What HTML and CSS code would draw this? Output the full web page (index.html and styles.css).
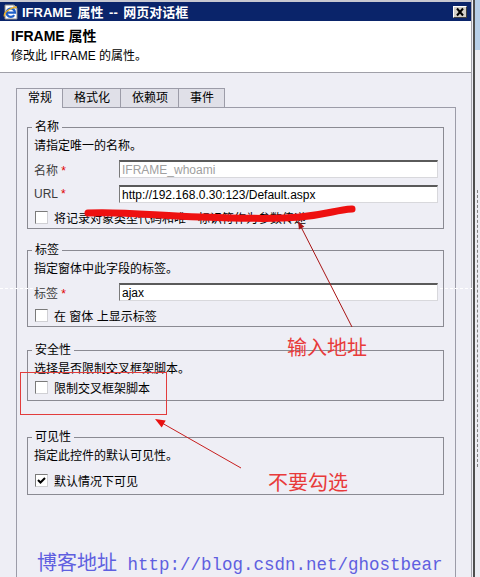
FILE: index.html
```html
<!DOCTYPE html>
<html>

<head>
  <meta charset="utf-8">
  <title>IFRAME 属性 -- 网页对话框</title>
  <link rel="stylesheet" href="styles.css">
</head>

<body>
  <div class="screen">
    <div class="dialog">
      <!-- Window title bar -->
      <div class="titlebar">
        <svg class="app-icon" viewBox="0 0 16 16">
          <path d="M2 1h9l3 3v11H2z" fill="#fdfdfd" stroke="#8a8a8a" stroke-width="1"/>
          <path d="M11 1v3h3" fill="#dcdcdc" stroke="#8a8a8a" stroke-width="1"/>
          <path d="M11.2 11.2A4.2 4.2 0 1 1 12 8.6H4.6" fill="none" stroke="#1f5fc8" stroke-width="2.2"/>
          <path d="M1.5 12.5C0 9 7 3.5 14 2.8" fill="none" stroke="#f0b020" stroke-width="1.3"/>
        </svg>
        <span class="title">IFRAME 属性 -- 网页对话框</span>
        <span class="close-button">
          <svg viewBox="0 0 12 10" width="12" height="10">
            <path d="M3 1.5l6 7M9 1.5l-6 7" stroke="#000" stroke-width="2"/>
          </svg>
        </span>
      </div>

      <!-- Dialog header -->
      <div class="dialog-header">
        <h1>IFRAME 属性</h1>
        <p>修改此 IFRAME 的属性。</p>
      </div>

      <div class="dialog-body">
        <div class="tabs">
          <span class="tab active">常规</span>
          <span class="tab">格式化</span>
          <span class="tab">依赖项</span>
          <span class="tab">事件</span>
        </div>

        <div class="tab-panel">
          <!-- Name -->
          <fieldset class="group">
            <legend>名称</legend>
            <p class="group-desc">请指定唯一的名称。</p>
            <div class="field-row">
              <label>名称 <span class="required">*</span></label>
              <input type="text" value="IFRAME_whoami" disabled>
            </div>
            <div class="field-row">
              <label>URL <span class="required">*</span></label>
              <input type="text" value="http://192.168.0.30:123/Default.aspx">
            </div>
            <div class="check-row">
              <span class="checkbox"></span>
              <span>将记录对象类型代码和唯一标识符作为参数传递</span>
            </div>
          </fieldset>

          <!-- Label -->
          <fieldset class="group">
            <legend>标签</legend>
            <p class="group-desc">指定窗体中此字段的标签。</p>
            <div class="field-row">
              <label>标签 <span class="required">*</span></label>
              <input type="text" value="ajax">
            </div>
            <div class="check-row">
              <span class="checkbox"></span>
              <span>在 窗体 上显示标签</span>
            </div>
          </fieldset>

          <!-- Security -->
          <fieldset class="group group-security">
            <legend>安全性</legend>
            <p class="group-desc">选择是否限制交叉框架脚本。</p>
            <div class="check-row">
              <span class="checkbox"></span>
              <span>限制交叉框架脚本</span>
            </div>
          </fieldset>

          <!-- Visibility -->
          <fieldset class="group group-visibility">
            <legend>可见性</legend>
            <p class="group-desc">指定此控件的默认可见性。</p>
            <div class="check-row">
              <span class="checkbox">
                <svg viewBox="0 0 11 11" width="11" height="11">
                  <path d="M2 5l2.5 2.5L9 3" fill="none" stroke="#000" stroke-width="2"/>
                </svg>
              </span>
              <span>默认情况下可见</span>
            </div>
          </fieldset>
        </div>
      </div>
    </div>

    <!-- Strip of the window behind the dialog -->
    <div class="desktop">
      <div class="desktop-top"></div>
      <div class="desktop-dash"></div>
    </div>

    <!-- Hand-drawn annotations over the screenshot -->
    <svg class="marks" width="480" height="577" viewBox="0 0 480 577">
      <path d="M88 213C120 211 160 216 200 217S270 220 300 217S335 210 352 209" fill="none" stroke="#ee1010" stroke-width="7" stroke-linecap="round"/>
      <line x1="352" y1="327" x2="299" y2="223" stroke="#a81414" stroke-width="1"/>
      <polygon points="298,221 304.3,226.8 298.9,229.5" fill="#a81414"/>
      <rect x="20.5" y="372.5" width="146" height="42" fill="none" stroke="#e23c3c"/>
      <line x1="241" y1="468" x2="162" y2="423" stroke="#c81e1e" stroke-width="1"/>
      <polygon points="155,419 165.7,420.5 161.7,427.5" fill="#e81010"/>
      <line x1="0" y1="288.5" x2="34" y2="288.5" stroke="#fff" stroke-dasharray="3 2"/>
      <line x1="440" y1="288.5" x2="472" y2="288.5" stroke="#fff" stroke-dasharray="3 2"/>
    </svg>
    <span class="note note-url">输入地址</span>
    <span class="note note-check">不要勾选</span>
    <div class="watermark"><span class="watermark-cjk">博客地址</span> http://blog.csdn.net/ghostbear</div>
  </div>
</body>

</html>
```

FILE: styles.css
```css
body {
  margin: 0;
  font-family: "Liberation Sans", "Noto Sans CJK SC", sans-serif;
  font-size: 12px;
  color: #000;
  background-color: #eeeef5;
}

.screen {
  position: relative;
  width: 480px;
  height: 577px;
  overflow: hidden;
  display: flex;
}

.dialog {
  width: 471px;
  border-right: 1px solid #a4a4ac;
  background-color: #eeeef5;
  display: flex;
  flex-direction: column;
}

/* title bar */
.titlebar {
  height: 19px;
  border-top: 2px solid #c8c8d0;
  background-color: #0a246a;
  color: #fff;
  display: flex;
  align-items: center;
  padding: 0 4px 0 3px;
}

.app-icon {
  width: 16px;
  height: 16px;
  margin-right: 3px;
}

.title {
  flex: 1;
  font-size: 13px;
  font-weight: bold;
  word-spacing: 2px;
}

.close-button {
  width: 14px;
  height: 12px;
  box-sizing: border-box;
  background-color: #d4d0c8;
  border: 1px solid;
  border-color: #fff #404040 #404040 #fff;
  display: flex;
  align-items: center;
  justify-content: center;
}

/* header */
.dialog-header {
  height: 36px;
  background-color: #fff;
  border-bottom: 1px solid #a0a0a8;
  padding: 7px 11px 8px;
}

h1 {
  height: 16px;
  margin: 0;
  font-size: 14px;
  line-height: 16px;
  font-weight: bold;
}

.dialog-header p {
  height: 16px;
  margin: 4px 0 0;
  line-height: 16px;
}

/* tabs */
.dialog-body {
  padding: 15px 0 0 16px;
}

.tabs {
  display: flex;
  position: relative;
  z-index: 1;
}

.tab {
  height: 18px;
  line-height: 18px;
  padding: 0 10px 0 11px;
  border-top: 1px solid #9c9ca8;
  border-right: 1px solid #9c9ca8;
  background-color: #e0e0e8;
}

.tab:first-child {
  border-left: 1px solid #9c9ca8;
}

.tab.active {
  background-color: #eeeef5;
  padding-bottom: 1px;
  margin-bottom: -1px;
}

.tab-panel {
  width: 417px;
  height: 480px;
  border: 1px solid #9c9ca8;
  padding: 12px 11px 0 10px;
}

/* group boxes */
.group {
  margin: 0;
  padding: 0 5px 4px 6px;
  border: 1px solid #8a8a92;
  min-width: 0;
}

.group + .group {
  margin-top: 14px;
}

.group legend {
  padding: 0 3px;
  margin-left: -2px;
  line-height: 14px;
}

.group-desc {
  margin: 5px 0 0;
  line-height: 14px;
}

.field-row {
  display: flex;
  align-items: center;
  height: 18px;
  margin-top: 7px;
}

.field-row label {
  width: 85px;
  color: #3c3c3c;
}

.required {
  color: #e00000;
}

.field-row input {
  flex: 1;
  min-width: 0;
  height: 18px;
  box-sizing: border-box;
  margin: 0;
  padding: 0 2px;
  border-style: solid;
  border-width: 2px 1px 1px 1px;
  border-color: #5a5a5a #d8d8dc #d8d8dc #7a7a7a;
  background-color: #fff;
  font-family: "Liberation Sans", "Noto Sans CJK SC", sans-serif;
  font-size: 12px;
  color: #000;
}

.field-row input:disabled {
  color: #a0a0a0;
  -webkit-text-fill-color: #a0a0a0;
}

.check-row {
  display: flex;
  align-items: center;
  height: 14px;
  margin-top: 7px;
}

.checkbox {
  width: 13px;
  height: 13px;
  box-sizing: border-box;
  margin: 0 6px 0 1px;
  border: 1px solid;
  border-color: #7a7a7a #d0d0d4 #d0d0d4 #7a7a7a;
  background-color: #fff;
  display: flex;
  align-items: center;
  justify-content: center;
}

.group-security {
  padding-bottom: 6px;
}

.group + .group-security {
  margin-top: 16px;
}

.group-security .check-row {
  margin-top: 4px;
}

.group + .group-visibility {
  margin-top: 29px;
}

.group-visibility {
  padding-bottom: 7px;
}

.group-visibility .check-row {
  margin-top: 10px;
}

/* window behind */
.desktop {
  flex: 1;
  margin-left: 1px;
  border-left: 2px solid #4e4e4e;
  background-color: #ececf2;
}

.desktop-top {
  height: 50px;
  background-color: #b8cfe8;
}

.desktop-dash {
  margin: 140px 0 0 2px;
  height: 277px;
  border-left: 1px dashed #808080;
}

/* annotations */
.marks {
  position: absolute;
  top: 0;
  left: 0;
  pointer-events: none;
}

.note {
  position: absolute;
  font-family: "Noto Sans CJK SC", sans-serif;
  font-size: 20px;
  line-height: 20px;
  color: #e83a3a;
}

.note-url {
  left: 287px;
  top: 337px;
}

.note-check {
  left: 268px;
  top: 472px;
}

.watermark {
  position: absolute;
  left: 37px;
  top: 551px;
  font-family: "Liberation Mono", monospace;
  font-size: 17.5px;
  line-height: 22px;
  color: #5f5fe0;
  white-space: nowrap;
}

.watermark-cjk {
  font-family: "Noto Sans CJK SC", sans-serif;
  font-size: 20px;
}
```
